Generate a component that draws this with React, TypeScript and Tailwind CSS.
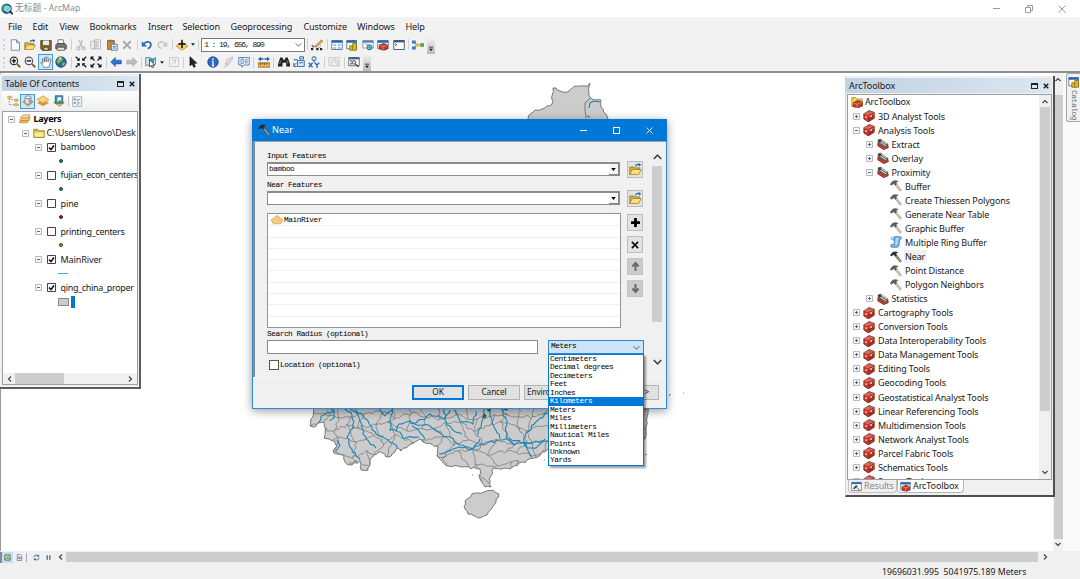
import React from "react";

type Pt = [number, number];

/* ---------- icons ---------- */

const shapes: Record<string, React.ReactNode> = {
  new: <path d="M3 1h7l4 4v10H3z M10 1v4h4" fill="#f7fbff" stroke="#55708f" />,
  open: (
    <>
      <path d="M1 14V5h5l1 1h6v3" fill="#d9b43a" stroke="#94771a" />
      <path d="M1 14l3-6h11l-3 6z" fill="#fbe08a" stroke="#a57f1c" />
      <path d="M8 4c1-2.500 3-2.500 5-2" fill="none" stroke="#2a64a8" strokeWidth="1.600" />
      <path d="M12 0l3 2-3 2.500z" fill="#2a64a8" />
    </>
  ),
  save: (
    <>
      <path d="M1 2h14v13H3l-2-2z" fill="#7b6a2e" stroke="#3c3517" />
      <path d="M4 2h8v6H4z" fill="#e9ecef" />
      <path d="M5 11h6v4H5z" fill="#d9cf9d" stroke="#3c3517" />
    </>
  ),
  print: (
    <>
      <path d="M4 7V1h7l1 6" fill="#fff" stroke="#555" />
      <path d="M1 8l2-2h10l2 2v5H1z" fill="#777" stroke="#333" />
      <path d="M3 11h10v4H3z" fill="#e9e9d0" stroke="#444" />
    </>
  ),
  cut: (
    <g fill="none" stroke="#b9b9b9" strokeWidth="1.6">
      <path d="M5 1l5 10M10 1L6 11" />
      <circle cx="4.5" cy="12.5" r="2" />
      <circle cx="11.5" cy="12.5" r="2" />
    </g>
  ),
  copy: <path d="M1 3h7v10H1z M6 1h8v12H6z M8 4h4 M8 7h4 M8 10h4" fill="#eee" stroke="#b5b5b5" strokeWidth="1.2" />,
  paste: (
    <>
      <path d="M2 2h9v12H2z" fill="#c98b2c" stroke="#7d5312" />
      <path d="M4 1h5v3H4z" fill="#777" />
      <path d="M7 7h8v8H7z" fill="#e4efff" stroke="#3b5f92" />
      <path d="M9 10h4M9 12h4" stroke="#3b5f92" />
    </>
  ),
  del: <path d="M3 3l10 10M13 3L3 13" stroke="#a8a8a8" strokeWidth="2.4" />,
  undo: (
    <>
      <path d="M4 6c5-4 10-2 9 3-.4 2-2 3-4 4" fill="none" stroke="#2b66b1" strokeWidth="2.2" />
      <path d="M1 3v7h7z" fill="#2b66b1" />
    </>
  ),
  redo: (
    <>
      <path d="M12 6C7 2 2 4 3 9c.4 2 2 3 4 4" fill="none" stroke="#c6c6c6" strokeWidth="2" />
      <path d="M15 3v7H8z" fill="#c6c6c6" />
    </>
  ),
  addData: (
    <>
      <path d="M8 4l8 5.500L8 15 0 9.500z" fill="#f6cf6a" stroke="#c18c1e" />
      <path d="M8 1v11M3 6.500h10" stroke="#111" strokeWidth="2" />
    </>
  ),
  editor: (
    <>
      <path d="M1 13l4-4 4 4 4-4" fill="none" stroke="#333" strokeDasharray="2 1" />
      <path d="M0 12h3v3H0zM7 12h3v3H7zM12 12h3v3h-3z" fill="#222" />
      <path d="M6 9l8-8 2 2-8 7z" fill="#e3b04b" stroke="#7c5a16" strokeWidth=".7" />
      <path d="M1 8l3 3" stroke="#b33" strokeWidth="1.5" />
    </>
  ),
  winTable: (
    <>
      <path d="M1 2h14v12H1z" fill="#fff" stroke="#35618f" />
      <path d="M1 2h14v3H1z" fill="#2464ad" />
      <path d="M3 7h4v2H3zM9 7h4v2H9zM3 11h4v2H3zM9 11h4v2H9z" fill="#7db4ea" />
    </>
  ),
  winCatalog: (
    <>
      <path d="M1 2h13v11H1z" fill="#fff" stroke="#35618f" />
      <path d="M1 2h13v3H1z" fill="#2464ad" />
      <path d="M5 9h4V6h5v9H5z" fill="#e2b91f" stroke="#7b6410" />
      <path d="M9 9v6" stroke="#7b6410" />
    </>
  ),
  winSearch: (
    <>
      <path d="M1 2h14v10H1z" fill="#fff" stroke="#7a8794" />
      <path d="M1 2h14v3H1z" fill="#5d84b3" />
      <path d="M3 7h5" stroke="#999" />
      <circle cx="10" cy="11" r="3.4" fill="#6fc0df" stroke="#23658e" strokeWidth="1.3" />
      <path d="M9 10l2 2" stroke="#3b9a4a" strokeWidth="2" />
    </>
  ),
  winToolbox: (
    <>
      <path d="M1 2h14v11H1z" fill="#fff" stroke="#35618f" />
      <path d="M1 2h14v3H1z" fill="#2464ad" />
      <path d="M3 8l6-2 5 2v5l-5 2-6-2z" fill="#c93a2b" stroke="#74170f" />
      <path d="M3 8l5 2 6-2M8 10v5" stroke="#f1a79e" fill="none" strokeWidth=".8" />
    </>
  ),
  python: (
    <>
      <path d="M1 2h14v12H1z" fill="#fff" stroke="#4e6177" strokeWidth="1.3" />
      <path d="M1 2h14v2.5H1z" fill="#33577f" />
      <path d="M3 6l2 1.500-2 1.500" fill="none" stroke="#111" />
    </>
  ),
  model: (
    <>
      <path d="M2 4l5 4-5 4M7 8h7" fill="none" stroke="#444" />
      <path d="M0 2h5v4H0z" fill="#2e78d2" />
      <path d="M0 10h5v4H0z" fill="#2e78d2" />
      <path d="M7 5l3 3-3 3-3-3z" fill="#f0b92a" />
      <path d="M11 5.500h5v5h-5z" fill="#57a84a" />
    </>
  ),
  zoomIn: (
    <>
      <circle cx="6.500" cy="6.500" r="5" fill="#f2f2f2" stroke="#333" strokeWidth="1.400" />
      <path d="M10.500 10.500l4.500 4.500" stroke="#8b5a2b" strokeWidth="2.600" />
      <path d="M6.500 3.500v6M3.500 6.500h6" stroke="#111" strokeWidth="1.800" />
    </>
  ),
  zoomOut: (
    <>
      <circle cx="6.500" cy="6.500" r="5" fill="#f2f2f2" stroke="#555" strokeWidth="1.400" />
      <path d="M10.500 10.500l4.500 4.500" stroke="#8b5a2b" strokeWidth="2.600" />
      <path d="M3.500 6.500h6" stroke="#111" strokeWidth="1.800" />
    </>
  ),
  hand: (
    <path
      d="M5 15c-1-3-3-4-4-6 1-1 2 0 3 1L3 4c1-1 2 0 2 1l1 3V2c1-1 2-1 2 0v6l1-6c1-1 2 0 2 1l-.500 5L13 4c1-.500 2 0 1.500 1L13 11l-1 4z"
      fill="#fff"
      stroke="#555"
      strokeWidth=".9"
    />
  ),
  globe: (
    <>
      <circle cx="8" cy="8" r="7" fill="#2766a8" stroke="#183f6d" />
      <path d="M3 5c3-4 6-3 7-1s-1 3-3 4-1 4-3 2-2-3-1-5zM10 9c2-1 4 0 4 0-1 3-3 5-4 4s-1-3 0-4z" fill="#7cbf4f" />
      <path d="M5 3c2-2 4-1 4-1L7 5z" fill="#d9f0b4" />
    </>
  ),
  shrink: (
    <g stroke="#111" strokeWidth="1.600" fill="#111">
      <path d="M1 1l4 4M15 1l-4 4M1 15l4-4M15 15l-4-4" />
      <path d="M6 3v3H3zM10 3v3h3zM6 13v-3H3zM10 13v-3h3z" strokeWidth=".8" />
    </g>
  ),
  expand: (
    <g stroke="#111" strokeWidth="1.600" fill="#111">
      <path d="M2 2l4 4M14 2l-4 4M2 14l4-4M14 14l-4-4" />
      <path d="M1 5V1h4zM15 5V1h-4zM1 11v4h4zM15 11v4h-4z" strokeWidth=".5" />
    </g>
  ),
  back: <path d="M1 8l6-6v3.500h8v5H7V14z" fill="#2f73cf" stroke="#18488c" strokeWidth=".8" />,
  fwd: <path d="M15 8L9 2v3.500H1v5h8V14z" fill="#bdbdbd" stroke="#aaa" strokeWidth=".8" />,
  selFeat: (
    <>
      <path d="M1 2h5l4 2 4-2v9l-5 3-4-2-4 1z" fill="#cfe9ee" stroke="#4c6a75" />
      <path d="M5 3l8 1-2 8-5-1z" fill="#2f9fbf" />
      <path d="M6 5l7 7-3 0 1.500 3-2 .5-1-3-2.500 2z" fill="#fff" stroke="#111" strokeWidth=".8" />
    </>
  ),
  clearSel: <path d="M2 2h12v12H2zM5 5h5v5M11 5l-6 6" fill="#f3f3f3" stroke="#c3c3c3" strokeWidth="1.200" />,
  pointer: <path d="M4 1l9 8.500H9l2.200 4.500-2.200 1-2-4.500L4 13z" fill="#222" stroke="#111" />,
  info: (
    <>
      <circle cx="8" cy="8" r="7" fill="#2f67c9" stroke="#173e88" />
      <path d="M8 3v2.200M8 6.800V13M6.500 13h3M6.500 7H8" stroke="#fff" strokeWidth="1.700" />
    </>
  ),
  bolt: <path d="M13 1L5 5 3 11l3-1-4 5 7-5 1-3 2-1z" fill="#ddd" stroke="#b0b0b0" strokeWidth=".8" />,
  popup: (
    <>
      <path d="M1 2h14v10H8l-3 3v-3H1z" fill="#e6f1fb" stroke="#567ea6" strokeWidth="1.200" />
      <path d="M4 4h3v6H4zM9 5h4M9 7h4M9 9h4" stroke="#567ea6" fill="none" />
    </>
  ),
  measure: (
    <>
      <path d="M0 9h16v6H0z" fill="#e6ad56" stroke="#9b6b1e" />
      <path d="M3 9v3M6 9v2M9 9v3M12 9v2" stroke="#5b3d0c" />
      <path d="M0 4l4-3v2h8V1l4 3-4 3V5H4v2z" fill="#1f62b5" />
      <path d="M8 1v6" stroke="#fff" />
    </>
  ),
  find: (
    <>
      <path d="M3 2h3l1 3h2l1-3h3l3 9v3h-5V9H6v5H0v-3z" fill="#222" />
      <path d="M2 11l2-5M12 6l1 4" stroke="#999" />
    </>
  ),
  route: (
    <>
      <path d="M6 6h9v8H6z" fill="#d7e9fb" stroke="#2d66a7" strokeWidth="1.200" />
      <path d="M9 1h5v3H9zM1 13l4-4M1 9v5h4M8 9h5" stroke="#2d66a7" strokeWidth="1.300" fill="none" />
      <path d="M1 5h5" stroke="#2d66a7" strokeWidth="1.500" />
    </>
  ),
  xy: (
    <>
      <circle cx="8" cy="3.500" r="2.700" fill="#cfe2f8" stroke="#2866b4" strokeWidth="1.300" />
      <path d="M8 6v3" stroke="#2866b4" strokeWidth="1.300" />
      <path d="M1 9l5 6M6 9l-5 6M9 9l3 3 3-3M12 12v4" fill="none" stroke="#2866b4" strokeWidth="1.700" />
    </>
  ),
  time: (
    <>
      <path d="M1 2h14v11H1z" fill="#eee" stroke="#c2c2c2" />
      <circle cx="9" cy="9" r="4.500" fill="#f4f4f4" stroke="#b9b9b9" />
      <path d="M9 6v3h3" stroke="#b9b9b9" fill="none" />
    </>
  ),
  viewer: (
    <>
      <path d="M1 2h14v11H1z" fill="#fff" stroke="#444" />
      <path d="M1 2h14v2.500H1z" fill="#35618f" />
      <circle cx="8" cy="8.500" r="2.500" fill="#ddd" stroke="#333" />
      <path d="M10 10.500l4 4M3 6l2 1M3 11l2-1" stroke="#333" strokeWidth="1.500" />
    </>
  ),
  byDraw: (
    <>
      <path d="M3 4v9h7M3 6h6" fill="none" stroke="#555" strokeDasharray="1 1" />
      <path d="M0 3l4-2 3 2-4 2zM9 7l3-2 4 2-4 2zM9 13l3-2 4 2-4 2z" fill="#f2b866" stroke="#c98d33" strokeWidth=".8" />
    </>
  ),
  bySource: (
    <>
      <path d="M1 9l7 6 7-6-7-3z" fill="#f2c469" stroke="#bb862a" />
      <path d="M4 3v7c0 3 8 3 8 0V3" fill="#dfe4ea" stroke="#657080" />
      <ellipse cx="8" cy="3" rx="4" ry="1.800" fill="#fff" stroke="#657080" />
      <path d="M10 5v6" stroke="#8d99a9" strokeWidth="2" />
    </>
  ),
  byVis: (
    <>
      <path d="M8 5l8 5.500L8 15 0 10.500z" fill="#dc9a3d" />
      <path d="M8 1l8 5-8 5-8-5z" fill="#f8cf86" stroke="#c58a2f" strokeWidth=".8" />
    </>
  ),
  bySel: (
    <>
      <path d="M1 10l7-3 7 3-6 5z" fill="#f0bb5d" stroke="#b57e25" />
      <path d="M3 1h10v10H3z" fill="#3c99a6" stroke="#265e70" />
      <path d="M6 3h5v4l-3 0-2 3z" fill="#fff" />
    </>
  ),
  options: (
    <>
      <path d="M1 1h13v14H1z" fill="#f7f9fb" stroke="#8795a5" />
      <path d="M3 4h2v2H3zM3 9h2v2H3zM7 5h5M7 7h3M7 10h5M7 12h3" stroke="#5b7897" fill="none" />
    </>
  ),
  layers: (
    <g stroke="#b57b20" strokeWidth=".9">
      <path d="M0 12l4-3h10l-3 4H1z" fill="#f0b85a" />
      <path d="M1 9l4-3h10l-3 4H2z" fill="#f6cb7c" />
      <path d="M2 5.500l4-3h9l-3 4H3z" fill="#fbdfa4" />
    </g>
  ),
  folder: (
    <>
      <path d="M1 14V3h5l2 2h7v9z" fill="#d8b83b" stroke="#8c7621" />
      <path d="M2 7h12v6H2z" fill="#f8ec9c" />
    </>
  ),
  toolboxRoot: (
    <>
      <path d="M1 14V2h5l2 2h7v10z" fill="#f2d04c" stroke="#a88a1b" />
      <path d="M3 9l6-3 6 2v5l-6 3-6-2z" fill="#c93a2b" stroke="#74170f" />
      <path d="M3 9l5 2 7-3M8 11v5" stroke="#f1a79e" fill="none" strokeWidth=".8" />
    </>
  ),
  toolbox: (
    <>
      <path d="M1 5l7-4 7 2v8l-8 5-6-4z" fill="#c0392b" stroke="#6d1b14" strokeWidth=".8" />
      <path d="M1 5l7-4 7 2-8 4z" fill="#d8695c" />
      <path d="M7 7v9l8-5V3z" fill="#a32e23" />
      <path d="M7 9l8-4" stroke="#e09a90" strokeWidth=".8" />
      <path d="M3 8l2 1v2l-2-1zM10 7.500l2-1v2l-2 1z" fill="#f0f0f0" />
      <path d="M6 2.500c1-1.500 4-1.500 5-.5" stroke="#444" fill="none" />
    </>
  ),
  toolset: (
    <>
      <path d="M1 7l4 1 10 3v2l-6 2.500-8-5z" fill="#c43b2e" stroke="#6d1b14" strokeWidth=".8" />
      <path d="M1 7V3l4-2 10 7v4L9 12z" fill="#5c5c58" />
      <path d="M4 5l8 5.500M6 3l7 5" stroke="#d5d2c8" strokeWidth="1.500" />
      <path d="M2 2l3 3" stroke="#333" strokeWidth="2" />
    </>
  ),
  hammer: (
    <>
      <path d="M7 5l7.500 9.500" stroke="#8d8778" strokeWidth="3.200" />
      <path d="M7 5l7.500 9.500" stroke="#d8d2c0" strokeWidth="2" />
      <path d="M0 6l3-4c2-1.500 5-1.500 8-.5L8 3.500l1 2-2 1.500-2-2-3 2z" fill="#5e5e5e" stroke="#4c4c4c" strokeWidth=".4" />
    </>
  ),
  hammerDark: (
    <>
      <path d="M7 5l7.500 9.500" stroke="#5b4f43" strokeWidth="3.200" />
      <path d="M7 5l7.500 9.500" stroke="#b8ab98" strokeWidth="1.500" />
      <path d="M0 6l3-4c2-1.500 5-1.500 8-.5L8 3.500l1 2-2 1.500-2-2-3 2z" fill="#2c2c2c" />
    </>
  ),
  script: (
    <>
      <path d="M5 1h9c2 1 1 4-1 4l-1 7c0 3-3 3-4 3H2c-2-1-1-4 1-4h3z" fill="#7db9ee" stroke="#2f74ba" />
      <path d="M8 4h3M7.500 7h3M7 10h3" stroke="#fff" strokeWidth="1.300" />
      <path d="M3 1c-2 1-2 4 1 4h2" fill="#cfe5fa" stroke="#2f74ba" />
    </>
  ),
  results: (
    <>
      <path d="M1 2h14v12H1z" fill="#fff" stroke="#35618f" />
      <path d="M1 2h14v2.500H1z" fill="#2464ad" />
      <path d="M7 8l7 7" stroke="#c79a5a" strokeWidth="2" />
      <path d="M3 11l4-5 3 1-5 5z" fill="#333" />
    </>
  ),
  app: (
    <>
      <circle cx="7.500" cy="7.500" r="7" fill="#1c5f8f" />
      <path d="M2 6c3-5 6-4 7-2s-2 3-3 4 0 4-2 3-2-3-2-5z" fill="#5bb56b" />
      <circle cx="9" cy="8" r="3.600" fill="#7cc4e2" stroke="#d3ecf5" strokeWidth="1" />
      <path d="M11.500 10.500l4 4.500" stroke="#222" strokeWidth="2.400" />
    </>
  ),
  layer: <path d="M8 2l8 6-3 5H3L0 8z" fill="#f5cb80" stroke="#d9a44d" />,
  plus: <path d="M8 1.500v13M1.500 8h13" stroke="#000" strokeWidth="4" />,
  cross: <path d="M3 3l10 10M13 3L3 13" stroke="#000" strokeWidth="2.400" />,
  up: <path d="M8 14.500V4M3.500 8L8 3l4.500 5" fill="none" stroke="#6a6a6a" strokeWidth="2.900" />,
  down: <path d="M8 1.500V12M3.500 8L8 13l4.500-5" fill="none" stroke="#6a6a6a" strokeWidth="2.900" />,
  dataView: (
    <>
      <path d="M2 2h12v12H2z" fill="#cfe0b8" stroke="#333" strokeWidth="1.500" />
      <path d="M4 11l4-6 4 3v3z" fill="#73a84c" />
    </>
  ),
  layoutView: (
    <>
      <path d="M3 1h7l3 3v11H3z" fill="#fff" stroke="#444" strokeWidth="1.300" />
      <path d="M5 6h6v6H5z" fill="#6c93c3" />
    </>
  ),
  refresh: (
    <g fill="none" stroke="#2d5f9e" strokeWidth="2.200">
      <path d="M2 7c1-5 8-6 11-2M14 9c-1 5-8 6-11 2" />
      <path d="M14 1v5H9zM2 15v-5h5z" fill="#2d5f9e" stroke="none" />
    </g>
  ),
  pause: <path d="M5 3v10M11 3v10" stroke="#3968a5" strokeWidth="3" />,
};

function Icon({ n, className = "size-[12px]" }: { n: string; className?: string }) {
  return (
    <svg viewBox="0 0 16 16" className={`shrink-0 ${className}`}>
      {shapes[n]}
    </svg>
  );
}

function Chevron({ dir, className = "size-[6px]", color = "#444", w = 2.4 }: { dir: "up" | "down" | "left" | "right"; className?: string; color?: string; w?: number }) {
  const d = { up: "M1 8l5-5 5 5", down: "M1 4l5 5 5-5", left: "M8 1L3 6l5 5", right: "M4 1l5 5-5 5" }[dir];
  return (
    <svg viewBox="0 0 12 12" className={`shrink-0 ${className}`}>
      <path d={d} fill="none" stroke={color} strokeWidth={w} />
    </svg>
  );
}

/* ---------- toolbars ---------- */

function Tool({ n, active }: { n: string; active?: boolean }) {
  return (
    <div className={`flex h-[16px] w-[15.4px] shrink-0 items-center justify-center ${active ? "bg-[#cde6f9] outline outline-[#3d9be0] -outline-offset-1" : ""}`}>
      <Icon n={n} />
    </div>
  );
}
const Sep = () => (
  <div className="flex w-[4.4px] shrink-0 justify-center">
    <div className="h-[11px] w-px bg-[#cfcfcf]" />
  </div>
);
const Grip = () => (
  <div className="flex w-[7.3px] shrink-0 justify-center">
    <div className="h-[11px] w-0 border-l-2 border-dotted border-[#d0d0d0]" />
  </div>
);
const Drop = () => (
  <div className="flex w-[7px] shrink-0 justify-center">
    <svg viewBox="0 0 6 4" className="h-[3px] w-[4px]"><path d="M0 0h6L3 4z" fill="#222" /></svg>
  </div>
);
const More = () => (
  <div className="ml-[1px] flex h-[16px] w-[8px] translate-y-[1px] items-end justify-center bg-gradient-to-b from-[#f0f0f0] to-[#b9b9b9] pb-[2px]">
    <svg viewBox="0 0 6 7" className="h-[6px] w-[4px]"><path d="M0 0h6v1.200H0zM0 3h6L3 6.500z" fill="#111" /></svg>
  </div>
);

function render(items: string[]) {
  return items.map((n, i) => {
    if (n === "|") return <Sep key={i} />;
    if (n === "v") return <Drop key={i} />;
    if (n === "_") return <div key={i} className="w-[4.4px]" />;
    return <Tool key={i} n={n} active={n === "hand"} />;
  });
}

const menus: [string, string][] = [
  ["File", "w-[24.500px]"],
  ["Edit", "w-[27px]"],
  ["View", "w-[30px]"],
  ["Bookmarks", "w-[58.500px]"],
  ["Insert", "w-[34.500px]"],
  ["Selection", "w-[48px]"],
  ["Geoprocessing", "w-[73px]"],
  ["Customize", "w-[53.500px]"],
  ["Windows", "w-[48.500px]"],
  ["Help", "w-[30px]"],
];

function Header() {
  return (
    <header className="shrink-0">
      <div className="flex h-[17px] items-center bg-white pl-[1px]">
        <Icon n="app" className="size-[12px]" />
        <span className="ml-[2px] text-[8.800px] text-[#8c8c8c]">无标题 - ArcMap</span>
        <div className="ml-auto flex items-center gap-[25px] pr-[14px]">
          <div className="h-px w-[7px] bg-[#999]" />
          <svg viewBox="0 0 8 8" className="size-[8px]"><path d="M.5 2.500h5v5h-5zM2.500 2.500v-2h5v5h-2" fill="none" stroke="#999" /></svg>
          <svg viewBox="0 0 8 8" className="size-[8px]"><path d="M.5.5l7 7M7.500.5l-7 7" stroke="#999" /></svg>
        </div>
      </div>
      <nav className="flex h-[19px] items-center bg-[#f2f2f2] pl-[8px] text-[9.100px] tracking-[-0.15px]">
        {menus.map(([m, w]) => (
          <span key={m} className={`shrink-0 whitespace-nowrap ${w}`}>{m}</span>
        ))}
      </nav>
      <div className="flex h-[17px] items-center bg-[#f2f2f2]">
        <Grip />
        {render(["new", "open", "save", "print", "|", "cut", "copy", "paste", "del", "|", "undo", "redo", "|", "addData", "v", "|"])}
        <div className="flex h-[14px] w-[104px] shrink-0 items-center justify-between border border-[#7a7a7a] bg-white pr-[2px] pl-[2px]">
          <span className="font-['Liberation_Mono',monospace] text-[8px] leading-none tracking-[-1.080px] whitespace-pre">1 : 19, 656, 890</span>
          <Chevron dir="down" className="size-[7px]" color="#555" w={1.5} />
        </div>
        {render(["|", "editor", "|", "winTable", "winCatalog", "winSearch", "winToolbox", "python", "|", "model"])}
        <More />
      </div>
      <div className="flex h-[19px] items-center border-b border-[#8f8f8f] bg-[#f2f2f2]">
        <Grip />
        {render(["zoomIn", "zoomOut", "hand", "globe", "|", "shrink", "expand", "|", "back", "fwd", "|", "selFeat", "v", "clearSel", "|", "pointer", "_", "info", "bolt", "popup", "|", "measure", "|", "find", "route", "xy", "|", "time", "|", "viewer"])}
        <More />
      </div>
    </header>
  );
}

/* ---------- map ---------- */

function noise(i: number) {
  const s = Math.sin(i * 127.1 + 3.7) * 43758.5453;
  return s - Math.floor(s) - 0.5;
}

function rough(pts: Pt[], amp: number, seed = 0): string {
  const out: string[] = [];
  let k = seed;
  pts.forEach((p, i) => {
    out.push(`${p[0]} ${p[1]}`);
    const q = pts[i + 1];
    if (!q) return;
    const n = Math.max(1, Math.round(Math.hypot(q[0] - p[0], q[1] - p[1]) / 3));
    for (let j = 1; j < n; j++) {
      const t = j / n;
      out.push(`${(p[0] + (q[0] - p[0]) * t + noise(++k) * amp).toFixed(1)} ${(p[1] + (q[1] - p[1]) * t + noise(++k) * amp).toFixed(1)}`);
    }
  });
  return "M" + out.join("L");
}

const south: Pt[] = [
  [316, 400], [314, 409], [310, 427], [316, 427], [318, 424], [324, 423], [325, 433], [324, 439], [329, 440], [335, 442], [337, 447], [333, 453], [344, 457], [345, 463], [352, 466],
  [360, 462], [361, 471], [368, 471], [370, 460], [379, 453], [389, 458], [395, 453], [398, 449], [401, 452], [411, 445], [420, 440], [423, 443], [438, 447], [437, 457], [448, 467],
  [461, 468], [480, 470], [480, 480], [485, 488], [491, 488], [489, 480], [491, 477], [493, 469], [510, 470], [522, 463], [538, 458], [548, 450], [560, 446], [600, 446], [642, 444],
  [646, 436], [646, 428], [648, 412], [650, 400], [316, 400],
];
const hainan: Pt[] = [[465, 502], [472, 495], [484, 493], [493, 491], [499, 495], [496, 503], [493, 507], [487, 516], [478, 519], [468, 515], [465, 510], [465, 502]];
const northEast: Pt[] = [
  [526, 122], [535, 111], [545, 109], [552, 105], [553, 89], [560, 92], [568, 93], [575, 87], [588, 87], [590, 84], [589, 97], [592, 100], [601, 101], [601, 108], [607, 117], [608, 122], [526, 122],
];

const rivers: Pt[][] = [
  [[317, 425], [324, 416], [333, 413], [330, 408]],
  [[333, 409], [334, 419], [330, 422]],
  [[343, 409], [352, 416], [354, 428], [347, 438], [352, 450], [360, 461]],
  [[346, 409], [358, 415], [362, 430], [366, 440], [376, 449]],
  [[355, 409], [366, 420], [376, 435], [388, 441], [401, 451]],
  [[338, 441], [340, 446], [336, 452]],
  [[379, 409], [385, 417], [394, 409]],
  [[392, 411], [390, 431], [400, 433], [403, 439], [419, 438]],
  [[396, 432], [399, 425], [410, 422], [416, 424], [430, 415], [444, 420], [450, 411]],
  [[410, 424], [430, 427], [440, 434], [450, 438], [460, 446], [470, 451], [481, 445], [506, 440], [527, 444], [548, 442]],
  [[439, 455], [450, 452], [460, 448], [474, 449], [480, 440]],
  [[444, 410], [447, 426], [454, 432], [462, 435]],
  [[455, 411], [460, 422], [473, 425], [476, 412]],
  [[485, 409], [482, 422], [478, 436]],
  [[489, 411], [494, 428], [500, 440]],
  [[501, 409], [507, 422], [506, 438], [514, 446], [520, 441]],
  [[548, 414], [536, 423], [526, 434], [524, 443], [532, 458]],
  [[524, 443], [528, 449], [536, 449], [545, 440]],
  [[425, 440], [418, 430], [412, 426]],
];

const borders: string[] = [];
for (let r = 0; r < 7; r++) {
  for (let c = 0; c < 26; c++) {
    const at = (i: number, j: number): Pt => [
      306 + i * 14 + (j % 2) * 7 + noise(i * 31 + j * 77) * 11,
      402 + j * 13 + noise(i * 53 + j * 19 + 5) * 11,
    ];
    const p = at(c, r);
    borders.push(rough([p, at(c + 1, r)], 3.2, r * 90 + c));
    if (noise(r * 41 + c * 7) > -0.25) borders.push(rough([p, at(c, r + 1)], 3.2, r * 50 + c * 3));
  }
}

function MapView() {
  return (
    <svg viewBox="1 74 1052 477" className="h-[477px] w-[1052px]">
      <defs>
        <clipPath id="land">
          <path d={rough(south, 2.4, 4)} />
        </clipPath>
      </defs>
      <g fill="#cccccc" stroke="#6b6b6b" strokeWidth=".9">
        <path d={rough(south, 2.4, 4)} />
        <path d={rough(hainan, 1.8, 9)} />
        <path d={rough(northEast, 2, 2)} />
      </g>
      <g clipPath="url(#land)">
        <path d={borders.join("")} fill="none" stroke="#7d7d7d" strokeWidth=".8" />
        {rivers.map((r, i) => (
          <path key={i} d={rough(r, 2.4, i * 11)} fill="none" stroke="#1c86b8" strokeWidth="1.100" />
        ))}
      </g>
      <path d={rough([[586, 119], [585, 104], [590, 99]], 1, 3)} fill="none" stroke="#6b6b6b" strokeWidth=".9" />
      <path d="M589 109l1-5 4-2 6 1M587 117l3 1" fill="none" stroke="#1c86b8" strokeWidth="1.200" />
      <g fill="#16805f" stroke="#222" strokeWidth=".5">
        <circle cx="484.500" cy="417" r="1.700" />
        <circle cx="489" cy="410.500" r="1.700" />
        <circle cx="506" cy="409.500" r="1.700" />
      </g>
      <path d="M669 397l1.500-2M683 394h1M472 476h1M544 461h1M645 455l2 1" stroke="#777" />
    </svg>
  );
}

/* ---------- shared panel parts ---------- */

function PanelTitle({ title }: { title: string }) {
  return (
    <div className="flex h-[15px] shrink-0 items-center bg-gradient-to-r from-[#c2d2e3] to-[#dae6f1] pr-[3px] pl-[3px] text-[9.100px] tracking-[-0.1px]">
      {title}
      <div className="ml-auto flex items-center gap-[5px]">
        <div className="h-[6px] w-[7px] border border-t-2 border-[#222]" />
        <svg viewBox="0 0 8 8" className="size-[6px]"><path d="M1 1l6 6M7 1L1 7" stroke="#111" strokeWidth="1.700" /></svg>
      </div>
    </div>
  );
}

function Toggle({ open }: { open: boolean }) {
  return (
    <svg viewBox="0 0 7 7" className="size-[7px] shrink-0">
      <path d="M.5.5h6v6h-6z" fill="#f6f6f6" stroke="#aaa" strokeWidth=".8" />
      <path d={open ? "M2 3.500h3" : "M2 3.500h3M3.500 2v3"} stroke="#3c5a96" strokeWidth=".9" />
    </svg>
  );
}

function Check({ on }: { on: boolean }) {
  return (
    <svg viewBox="0 0 9 9" className="size-[9px] shrink-0">
      <path d="M.5.500h8v8h-8z" fill="#fff" stroke="#444" />
      {on && <path d="M2 4.500l2 2 3-4" fill="none" stroke="#111" strokeWidth="1.500" />}
    </svg>
  );
}

/* ---------- table of contents ---------- */

const tocLayers: { name: string; on: boolean; sym: React.ReactNode }[] = [
  { name: "bamboo", on: true, sym: <i className="size-[4px] rounded-full border border-[#20443b] bg-[#16946c]" /> },
  { name: "fujian_econ_centers", on: false, sym: <i className="size-[4px] rounded-full border border-[#20443b] bg-[#16946c]" /> },
  { name: "pine", on: false, sym: <i className="size-[4px] rounded-full border border-[#4b1238] bg-[#a31467]" /> },
  { name: "printing_centers", on: false, sym: <i className="size-[4px] rounded-full border border-[#4f3b10] bg-[#b5842a]" /> },
  { name: "MainRiver", on: true, sym: <i className="-ml-[1px] h-px w-[10px] bg-[#4aacd6]" /> },
  {
    name: "qing_china_proper",
    on: true,
    sym: (
      <>
        <i className="-ml-[1px] h-[8px] w-[11px] border border-[#8b8b8b] bg-[#cccccc]" />
        <i className="ml-[2px] h-[12px] w-[4px] bg-[#0078d7]" />
      </>
    ),
  },
];

function Toc() {
  return (
    <section className="absolute top-[74px] left-0 flex h-[315px] w-[141px] flex-col border-r-2 border-b-2 border-[#5c5c5c] bg-[#f0f0f0] pt-[2px] pr-[1px] pb-[2px] pl-[2px]">
      <PanelTitle title="Table Of Contents" />
      <div className="flex h-[20px] shrink-0 items-center bg-gradient-to-b from-white to-[#eeeeee] pl-[3px]">
        <div className="flex w-[15px] justify-center"><Icon n="byDraw" /></div>
        <div className="flex h-[15px] w-[15px] items-center justify-center border border-[#3d9be0] bg-[#cde6f9]"><Icon n="bySource" /></div>
        <div className="flex w-[16px] justify-center"><Icon n="byVis" /></div>
        <div className="flex w-[16px] justify-center"><Icon n="bySel" /></div>
        <div className="mx-[1px] h-[10px] w-px bg-[#c5c5c5]" />
        <div className="flex w-[15px] justify-center"><Icon n="options" className="size-[11px]" /></div>
      </div>
      <div className="flex min-h-0 flex-1 flex-col overflow-hidden border border-[#9a9ea6] bg-white">
        <div className="flex-1 text-[9px] tracking-[-0.1px]">
          <div className="flex h-[14.060px] items-center pl-[5px] font-bold"><Toggle open /><Icon n="layers" className="ml-[4px] size-[12px]" /><span className="ml-[2.500px] text-[9px] tracking-[-0.3px] text-black">Layers</span></div>
          <div className="flex h-[14.060px] items-center pl-[18.500px] whitespace-nowrap"><Toggle open /><Icon n="folder" className="ml-[4px] size-[12px]" /><span className="ml-[2px]">C:\Users\lenovo\Desk</span></div>
          {tocLayers.map((l) => (
            <div key={l.name}>
              <div className="flex h-[14.060px] items-center pl-[32px] whitespace-nowrap"><Toggle open /><span className="ml-[5px] flex"><Check on={l.on} /></span><span className={`ml-[4.500px] ${l.name.includes("_") ? "tracking-[-0.32px]" : ""}`}>{l.name}</span></div>
              <div className="flex h-[14.060px] items-center pl-[56px]">{l.sym}</div>
            </div>
          ))}
        </div>
        <div className="flex h-[11px] items-center bg-[#f0f0f0] pr-[4px] pl-[4px]">
          <Chevron dir="left" />
          <div className="ml-[2px] h-full w-[49px] bg-[#cdcdcd]" />
          <Chevron dir="right" className="ml-auto size-[6px]" />
        </div>
      </div>
    </section>
  );
}

/* ---------- toolbox ---------- */

type Node = { t: string; lvl: number; icon: string; open?: boolean; sel?: boolean };
const nodes: Node[] = [
  { t: "3D Analyst Tools", lvl: 1, icon: "toolbox", open: false },
  { t: "Analysis Tools", lvl: 1, icon: "toolbox", open: true },
  { t: "Extract", lvl: 2, icon: "toolset", open: false },
  { t: "Overlay", lvl: 2, icon: "toolset", open: false },
  { t: "Proximity", lvl: 2, icon: "toolset", open: true },
  { t: "Buffer", lvl: 3, icon: "hammer" },
  { t: "Create Thiessen Polygons", lvl: 3, icon: "hammer" },
  { t: "Generate Near Table", lvl: 3, icon: "hammer" },
  { t: "Graphic Buffer", lvl: 3, icon: "hammer" },
  { t: "Multiple Ring Buffer", lvl: 3, icon: "script" },
  { t: "Near", lvl: 3, icon: "hammerDark", sel: true },
  { t: "Point Distance", lvl: 3, icon: "hammer" },
  { t: "Polygon Neighbors", lvl: 3, icon: "hammer" },
  { t: "Statistics", lvl: 2, icon: "toolset", open: false },
  ...["Cartography", "Conversion", "Data Interoperability", "Data Management", "Editing", "Geocoding", "Geostatistical Analyst", "Linear Referencing", "Multidimension", "Network Analyst", "Parcel Fabric", "Schematics", "Server"].map(
    (s) => ({ t: `${s} Tools`, lvl: 1, icon: "toolbox", open: false }),
  ),
];
const indent: Record<number, string> = { 1: "pl-[4.500px]", 2: "pl-[18px]", 3: "pl-[42px]" };

function Toolbox() {
  return (
    <section className="absolute top-[76px] left-[845px] flex h-[421px] w-[210px] flex-col border-r-2 border-b-2 border-l border-r-[#4d4d4d] border-b-[#4d4d4d] border-l-[#d5d5d5] bg-[#f0f0f0] pt-[2px] pr-[1px]">
      <PanelTitle title="ArcToolbox" />
      <div className="mt-[1px] ml-[1px] flex h-[386px] shrink-0 overflow-hidden border border-[#9a9ea6] bg-white">
        <div className="flex-1 text-[9px] tracking-[-0.14px]">
          <div className="flex h-[14.060px] items-center pl-[2.500px]"><Icon n="toolboxRoot" /><span className="ml-[2.500px]">ArcToolbox</span></div>
          {nodes.map((n) => (
            <div key={n.t} className={`flex h-[14.060px] items-center whitespace-nowrap ${indent[n.lvl]}`}>
              {n.open !== undefined && <span className="mr-[3.500px] flex"><Toggle open={n.open} /></span>}
              <Icon n={n.icon} />
              <span className={`ml-[2px] px-[1px] leading-[13px] ${n.sel ? "bg-[#f0f0f0] pr-[2px]" : ""}`}>{n.t}</span>
            </div>
          ))}
        </div>
        <div className="flex w-[12px] flex-col items-center bg-[#f0f0f0] py-[4px]">
          <Chevron dir="up" />
          <div className="mt-[2px] h-[304px] w-[10px] bg-[#cdcdcd]" />
          <Chevron dir="down" className="mt-auto size-[6px]" />
        </div>
      </div>
      <div className="flex h-[13px] pl-[2px] text-[9px] tracking-[-0.1px]">
        <div className="flex w-[49px] items-center gap-[2px] rounded-b-sm border border-t-0 border-[#c4c4c4] pl-[2px] text-[#8a8a8a]"><Icon n="results" className="size-[11px]" />Results</div>
        <div className="flex w-[67px] items-center gap-[2px] rounded-b-sm border border-t-0 border-[#b5b5b5] bg-white pl-[2px]"><Icon n="winToolbox" className="size-[11px]" />ArcToolbox</div>
      </div>
    </section>
  );
}

/* ---------- dialog ---------- */

const units = ["Centimeters", "Decimal degrees", "Decimeters", "Feet", "Inches", "Kilometers", "Meters", "Miles", "Millimeters", "Nautical Miles", "Points", "Unknown", "Yards"];

function SideBtn({ n, cls, dim }: { n: string; cls: string; dim?: boolean }) {
  return (
    <div className={`flex h-[17px] w-[16px] shrink-0 items-center justify-center border ${dim ? "border-[#c4c4c4] bg-[#cbcbcb]" : "border-[#bdbdbd] bg-[#e2e2e2]"} ${cls}`}>
      <Icon n={n} className={n === "open" ? "size-[13px]" : n === "cross" ? "size-[10px]" : "size-[11px]"} />
    </div>
  );
}

function Combo({ value }: { value: string }) {
  return (
    <div className="flex h-[14px] shrink-0 items-center border border-t-2 border-[#8b8b8b] bg-white pl-px">
      <span className="flex-1 leading-none">{value}</span>
      <div className="flex h-full w-[10px] items-center justify-center border-r border-b border-[#888] bg-[#f4f4f4]">
        <svg viewBox="0 0 6 4" className="h-[3px] w-[5px]"><path d="M0 0h6L3 4z" fill="#000" /></svg>
      </div>
    </div>
  );
}

function Dialog() {
  return (
    <section className="absolute top-[119px] left-[252px] flex h-[290px] w-[415px] flex-col border border-[#2f8bd8] bg-[#f0f0f0] shadow-[0_2px_9px_rgba(0,0,0,0.4)]">
      <div className="-mx-px -mt-px flex h-[22px] shrink-0 items-center bg-[#0078d7] pl-[6px] text-[9.100px] text-white">
        <Icon n="hammerDark" className="size-[12px]" />
        <span className="ml-[2px]">Near</span>
        <div className="ml-auto flex items-center gap-[26px] pr-[14px]">
          <div className="h-px w-[7px] bg-white" />
          <div className="size-[7px] border border-white" />
          <svg viewBox="0 0 8 8" className="size-[7px]"><path d="M.5.5l7 7M7.500.5l-7 7" stroke="#fff" /></svg>
        </div>
      </div>
      <div className="flex h-[236px] shrink-0 border-t border-l-2 border-t-[#a0a0a0] border-l-[#8a8a8a] pl-[12px] font-['Liberation_Mono',monospace] text-[7.800px] tracking-[-0.46px] text-black">
        <div className="flex w-[353px] shrink-0 flex-col">
          <div className="mt-[8px] h-[12px] leading-[12px]">Input Features</div>
          <Combo value="bamboo" />
          <div className="mt-[3px] h-[12px] leading-[13px]">Near Features</div>
          <Combo value="" />
          <div className="mt-[8px] flex h-[115px] w-[354px] shrink-0 flex-col overflow-hidden border border-[#8f959e] bg-white pt-[1px]">
            {Array.from({ length: 10 }, (_, i) => (
              <div key={i} className="flex h-[11.300px] shrink-0 items-center border-b border-[#f1f1f1] pl-[3px]">
                {i === 0 && (<><Icon n="layer" className="size-[12px]" /><span className="ml-[1px] pt-[2px] leading-none">MainRiver</span></>)}
              </div>
            ))}
          </div>
          <div className="h-[12px] leading-[13px]">Search Radius (optional)</div>
          <div className="flex gap-[10px]">
            <div className="h-[14px] w-[271px] shrink-0 border border-[#8a8a8a] bg-white" />
            <div className="relative h-[14px] w-[96px] shrink-0">
              <div className="flex h-[14px] items-center justify-between border border-[#2f86d3] bg-[#cce4f7] pr-[3px] pl-[2px]"><span>Meters</span><Chevron dir="down" color="#555" w={1.6} className="size-[7px]" /></div>
              <div className="absolute top-[14px] left-0 z-20 w-[96px] border border-[#0078d7] bg-white shadow-[2px_2px_2px_rgba(0,0,0,0.4)]">
                {units.map((u) => (
                  <div key={u} className={`h-[8.460px] pl-[1px] leading-[8.460px] ${u === "Kilometers" ? "bg-[#0078d7] text-white" : ""}`}>{u}</div>
                ))}
              </div>
            </div>
          </div>
          <div className="mt-[6px] flex h-[10px] items-center pl-[2px]">
            <div className="size-[10px] border border-[#555] bg-white" />
            <span className="ml-[1px] pt-px">Location (optional)</span>
          </div>
        </div>
        <div className="ml-[7px] flex flex-col">
          <SideBtn n="open" cls="mt-[19px]" />
          <SideBtn n="open" cls="mt-[12px]" />
          <SideBtn n="plus" cls="mt-[7px]" />
          <SideBtn n="cross" cls="mt-[5px]" />
          <SideBtn n="up" dim cls="mt-[5px]" />
          <SideBtn n="down" dim cls="mt-[5px]" />
        </div>
        <div className="ml-[9px] flex h-full w-[10px] flex-col items-center pt-[11px] pb-[11px]">
          <Chevron dir="up" className="size-[9px]" w={2.2} />
          <div className="mt-[4px] h-[156px] w-[10px] bg-[#cdcdcd]" />
          <Chevron dir="down" className="mt-auto size-[9px]" w={2.2} />
        </div>
      </div>
      <div className="flex flex-1 justify-end gap-[4px] border-t border-[#f8f8f8] pt-[7px] pr-[7px] text-[8.300px] tracking-[-0.15px]">
        <div className="flex h-[15px] w-[52px] items-center justify-center border-2 border-[#0078d7] bg-[#e1e1e1]">OK</div>
        <div className="flex h-[15px] w-[52px] items-center justify-center border border-[#b2b2b2] bg-[#e1e1e1]">Cancel</div>
        <div className="flex h-[15px] w-[74px] items-center border border-[#b2b2b2] bg-[#e1e1e1] pl-[2px]">Environments...</div>
        <div className="flex h-[15px] w-[57px] items-center justify-end border border-[#b2b2b2] bg-[#e1e1e1] pr-[9px]">&gt;&gt;</div>
      </div>
    </section>
  );
}

/* ---------- page ---------- */

export default function App() {
  return (
    <div className="relative flex h-[579px] w-[1080px] flex-col overflow-hidden bg-[#f0f0f0] font-['Noto_Sans','Noto_Sans_CJK_SC',sans-serif] text-[#1a1a1a]">
      <Header />
      <div className="flex h-[479px] shrink-0 border-t border-[#8f8f8f]">
        <div className="w-[1053px] shrink-0 overflow-hidden border-l border-[#9b9b9b] bg-white"><MapView /></div>
        <div className="flex w-[10px] flex-col items-center bg-[#f0f0f0] py-[4px]">
          <Chevron dir="up" />
          <div className="mt-[12px] h-[444px] w-[9px] bg-[#cdcdcd]" />
          <Chevron dir="down" className="mt-auto size-[6px]" />
        </div>
        <div className="flex flex-1 flex-col items-end bg-[#fafafa]">
          <div className="flex h-[49px] w-[14px] flex-col items-center rounded-l-[3px] border border-r-0 border-[#a5a5a5] bg-[#f2f2f2] pt-[2px]">
            <Icon n="winCatalog" className="size-[12px]" />
            <span className="mt-[2px] font-['Liberation_Mono',monospace] text-[8px] leading-[10px] tracking-[-0.5px] text-[#666] [writing-mode:vertical-rl]">Catalog</span>
          </div>
        </div>
      </div>
      <div className="flex h-[12px] shrink-0 items-center bg-[#f0f0f0]">
        <div className="flex h-[11px] w-[13px] items-center justify-center border-l-2 border-[#888] bg-[#bfdff7]"><Icon n="dataView" className="size-[7px]" /></div>
        <div className="flex w-[13px] justify-center"><Icon n="layoutView" className="size-[7px]" /></div>
        <div className="h-[9px] w-px bg-[#aaa]" />
        <div className="ml-[5px] flex w-[9px] justify-center"><Icon n="refresh" className="size-[7px]" /></div>
        <div className="ml-[3px] flex w-[9px] justify-center"><Icon n="pause" className="size-[7px]" /></div>
        <Chevron dir="left" className="ml-[5px] size-[6px]" />
        <div className="ml-[2px] h-[10px] w-[972px] bg-[#cdcdcd]" />
        <Chevron dir="right" className="ml-[4px] size-[6px]" />
      </div>
      <footer className="flex flex-1 items-center bg-[#f0f0f0] pt-[3px] pl-[882px] text-[8.700px] whitespace-pre">
        <span>19696031.995  5041975.189 Meters</span>
      </footer>
      <Toc />
      <Toolbox />
      <Dialog />
    </div>
  );
}
